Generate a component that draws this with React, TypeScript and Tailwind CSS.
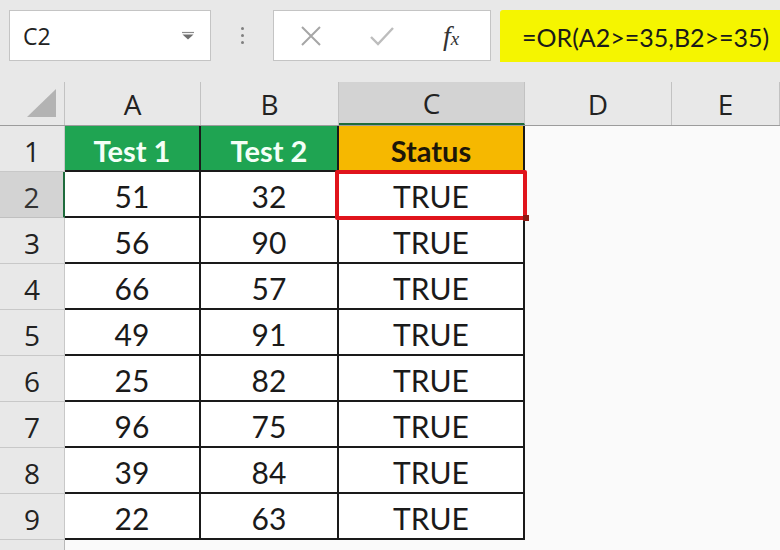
import React from 'react'

const rows: [number, number, number][] = [
  [2, 51, 32],
  [3, 56, 90],
  [4, 66, 57],
  [5, 49, 91],
  [6, 25, 82],
  [7, 96, 75],
  [8, 39, 84],
  [9, 22, 63],
]

const cols = 'grid grid-cols-[65px_136px_138px_186px_147px_1fr]'
const uiFont = { fontFamily: '"Open Sans", "Noto Sans", sans-serif' }
const cellFont = { fontFamily: 'Lato, "Liberation Sans", sans-serif' }

function NameBoxArrow() {
  return (
    <svg width="16" height="10" viewBox="0 0 16 10">
      <path d="M2 1.5h12" stroke="#8a8a8a" strokeWidth="1.2" />
      <path d="M2.5 3.5h11l-5.5 5z" fill="#6f6f6f" />
    </svg>
  )
}

function SelectAll() {
  return (
    <svg width="30" height="28" viewBox="0 0 30 28">
      <path d="M29 0v28H0z" fill="#b3b3b3" />
    </svg>
  )
}

export default function App() {
  return (
    <div className="w-[780px] h-[550px] overflow-hidden bg-[#e8e8e8] relative">
      {/* formula bar */}
      <div className="h-[80px] flex items-start pt-[10px] pl-[9px]">
        <div className="w-[202px] h-[51px] bg-white border border-[#c4c4c4] flex items-center justify-between pl-[13px] pr-[14px]">
          <span className="text-[23px] leading-none text-[#222] pt-[2px]" style={uiFont}>C2</span>
          <NameBoxArrow />
        </div>
        <div className="w-[62px] h-[51px] flex flex-col items-center justify-center gap-[4px]">
          <span className="w-[3px] h-[3px] rounded-full bg-[#808080]" />
          <span className="w-[3px] h-[3px] rounded-full bg-[#808080]" />
          <span className="w-[3px] h-[3px] rounded-full bg-[#808080]" />
        </div>
        <div className="w-[218px] h-[51px] bg-white border border-[#c4c4c4] flex items-center">
          <div className="w-[74px] flex justify-center">
            <svg width="22" height="22" viewBox="0 0 22 22">
              <path d="M2 2l18 18M20 2L2 20" stroke="#a6a6a6" strokeWidth="2" />
            </svg>
          </div>
          <div className="w-[68px] flex justify-center">
            <svg width="26" height="22" viewBox="0 0 26 22">
              <path d="M2 12l7 7L24 3" stroke="#bdbdbd" strokeWidth="2.4" fill="none" />
            </svg>
          </div>
          <div className="flex-1 flex justify-center pr-[4px]">
            <span className="text-[28px] italic text-[#333] leading-none" style={{ fontFamily: '"Liberation Serif", serif' }}>
              f<span className="text-[19px]">x</span>
            </span>
          </div>
        </div>
        <div className="ml-[9px] flex-1 h-[52px] bg-[#f5f500] rounded-tl-[3px] flex items-center pl-[22px]">
          <span className="text-[25px] leading-none text-[#1a1a1a] whitespace-nowrap pt-[2px]" style={cellFont}>=OR(A2&gt;=35,B2&gt;=35)</span>
        </div>
      </div>

      {/* column headers */}
      <div className={`${cols} h-[46px] border-b border-[#9c9c9c]`} style={uiFont}>
        <div className="flex items-end justify-end pr-[7px] pb-[8px] border-r border-[#c2c2c2] mt-[2px]">
          <SelectAll />
        </div>
        {['A', 'B', 'C', 'D', 'E'].map(l => (
          <div
            key={l}
            className={
              l === 'C'
                ? 'flex items-center justify-center text-[28px] leading-none text-[#222] bg-[#d3d3d3] border-r border-[#c2c2c2] border-b-2 border-b-[#1e6b3c] mt-[2px]'
                : 'flex items-center justify-center text-[28px] leading-none text-[#222] border-r border-[#c2c2c2] mt-[2px]'
            }
          >
            {l}
          </div>
        ))}
      </div>

      {/* header row 1 */}
      <div className={`${cols} h-[46px] overflow-hidden`}>
        <div className="flex items-center justify-center pt-[4px] text-[28px] leading-none text-[#222] border-b border-[#c8c8c8] border-r border-[#b8b8b8]" style={uiFont}>1</div>
        <div className="bg-[#1fa452] flex items-center justify-center pt-[4px] text-[29px] leading-none font-bold text-[#f4fff7] border-r-2 border-[#1a1a1a] border-b-2 border-b-[#1a1a1a]" style={cellFont}>Test 1</div>
        <div className="bg-[#1fa452] flex items-center justify-center pt-[4px] text-[29px] leading-none font-bold text-[#f4fff7] border-r-2 border-[#1a1a1a] border-b-2 border-b-[#1a1a1a]" style={cellFont}>Test 2</div>
        <div className="bg-[#f6b800] flex items-center justify-center pt-[4px] text-[29px] leading-none font-bold text-[#1c1608] border-r-2 border-[#1a1a1a] border-b-2 border-b-[#1a1a1a]" style={cellFont}>Status</div>
        <div className="col-span-2 bg-[#fafafa]" />
      </div>

      {rows.map(([n, a, b]) => (
        <div key={n} className={`${cols} h-[46px] overflow-hidden`}>
          <div
            className={
              n === 2
                ? 'flex items-center justify-center pt-[4px] text-[28px] leading-none text-[#333] bg-[#d3d3d3] border-b border-[#c0c0c0] border-r-2 border-r-[#1e6b3c]'
                : 'flex items-center justify-center pt-[4px] text-[28px] leading-none text-[#222] border-b border-[#c8c8c8] border-r border-[#b8b8b8]'
            }
            style={uiFont}
          >
            {n}
          </div>
          <div className="bg-white flex items-center justify-center pt-[4px] text-[30px] leading-none text-[#1a1a1a] border-r-2 border-[#1a1a1a] border-b-2 border-b-[#1a1a1a]" style={cellFont}>{a}</div>
          <div className="bg-white flex items-center justify-center pt-[4px] text-[30px] leading-none text-[#1a1a1a] border-r-2 border-[#1a1a1a] border-b-2 border-b-[#1a1a1a]" style={cellFont}>{b}</div>
          <div className="bg-white flex items-center justify-center pt-[4px] text-[30px] leading-none text-[#1a1a1a] border-r-2 border-[#1a1a1a] border-b-2 border-b-[#1a1a1a]" style={cellFont}>TRUE</div>
          <div className="col-span-2 bg-[#fafafa]" />
        </div>
      ))}

      <div className={`${cols} h-[46px]`}>
        <div className="border-r border-[#b8b8b8]" />
        <div className="col-span-5 bg-[#fafafa]" />
      </div>

      {/* active cell outline */}
      <div className="absolute left-[335px] top-[170px] w-[192px] h-[50px] border-[4px] border-[#e0141c] rounded-[2px] pointer-events-none" />
      <div className="absolute left-[523px] top-[215px] w-[6px] h-[6px] bg-[#8a1a14]" />
    </div>
  )
}
